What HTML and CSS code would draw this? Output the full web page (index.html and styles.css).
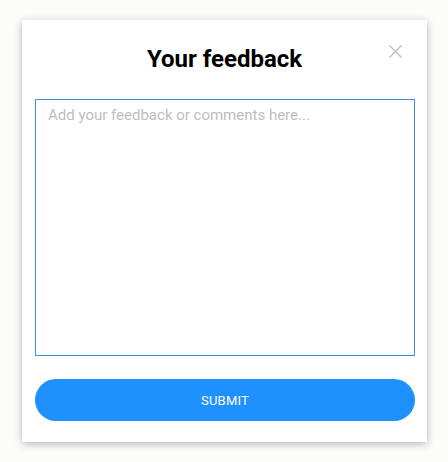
FILE: index.html
```html
<!DOCTYPE html>
<html>
<head>
<meta charset="utf-8">
<link rel="stylesheet" href="styles.css">
</head>
<body>
<div class="modal">
  <div class="header">
    <h1 class="title">Your feedback</h1>
    <button class="close" aria-label="Close">
      <svg width="13" height="13" viewBox="0 0 13 13"><path d="M0.5 0.5L12.5 12.5M12.5 0.5L0.5 12.5" stroke="#bdbdbd" stroke-width="1.3" fill="none"/></svg>
    </button>
  </div>
  <textarea class="field" placeholder="Add your feedback or comments here..."></textarea>
  <button class="submit">SUBMIT</button>
</div>
</body>
</html>
```
FILE: styles.css
```css
html, body { margin: 0; padding: 0; }
body {
  background: #fcfcfa;
  font-family: Roboto, "Liberation Sans", sans-serif;
  width: 448px;
  height: 462px;
  overflow: hidden;
}
.modal {
  margin: 20px 0 0 22px;
  width: 405px;
  height: 422px;
  box-sizing: border-box;
  background: #fff;
  box-shadow: 0 2px 8px rgba(0,0,0,0.28);
  padding: 26px 13px 0 13px;
  display: flex;
  flex-direction: column;
}
.header {
  position: relative;
  height: 26px;
  display: flex;
  justify-content: center;
  align-items: center;
}
.title {
  margin: 0;
  font-size: 24px;
  font-weight: 700;
  line-height: 26px;
  color: #000;
}
.close {
  position: absolute;
  right: 12px;
  top: -1px;
  padding: 0;
  border: 0;
  background: none;
  width: 13px;
  height: 13px;
  display: block;
}
.close svg { display: block; }
.field {
  margin-top: 27px;
  width: 380px;
  height: 257px;
  box-sizing: border-box;
  border: 1px solid #3a8ee6;
  outline: none;
  resize: none;
  padding: 6px 12px;
  font-family: Roboto, "Liberation Sans", sans-serif;
  font-size: 15px;
  line-height: 18px;
  color: #333;
}
.field::placeholder { color: #bdbdbd; }
.submit {
  margin-top: 23px;
  width: 380px;
  height: 42px;
  border: 0;
  border-radius: 21px;
  background: #1e90ff;
  color: #fff;
  font-family: Roboto, "Liberation Sans", sans-serif;
  font-size: 13px;
  letter-spacing: 0.2px;
}
```
